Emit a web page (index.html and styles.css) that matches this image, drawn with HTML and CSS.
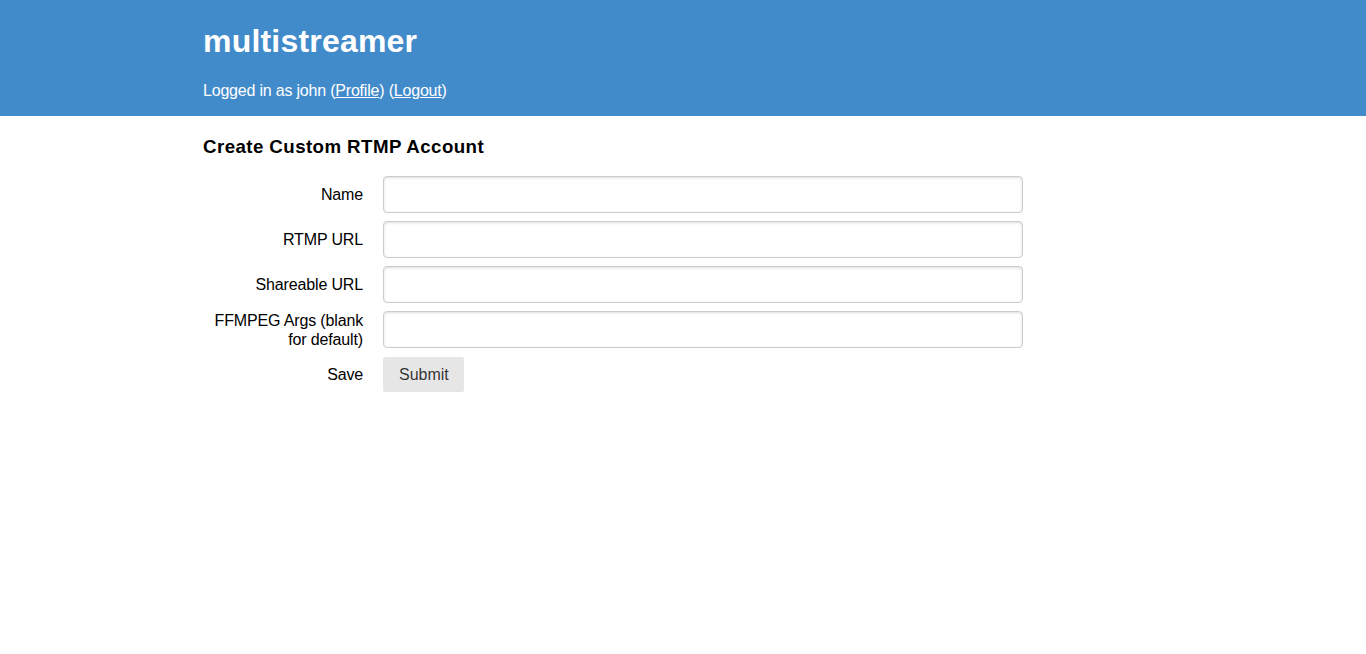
FILE: index.html
```html
<!DOCTYPE html>
<html>
<head>
<meta charset="utf-8">
<title>multistreamer</title>
<link rel="stylesheet" href="styles.css">
</head>
<body>
<header class="site-header">
  <div class="container">
    <h1 class="site-title">multistreamer</h1>
    <p class="user-line">Logged in as john (<a href="#">Profile</a>) (<a href="#">Logout</a>)</p>
  </div>
</header>
<main class="container">
  <h3 class="page-title">Create Custom RTMP Account</h3>
  <form class="form-aligned">
    <div class="control-group">
      <label class="control-label" for="name">Name</label>
      <input class="text-input" id="name" type="text">
    </div>
    <div class="control-group">
      <label class="control-label" for="rtmp">RTMP URL</label>
      <input class="text-input" id="rtmp" type="text">
    </div>
    <div class="control-group">
      <label class="control-label" for="share">Shareable URL</label>
      <input class="text-input" id="share" type="text">
    </div>
    <div class="control-group control-group-top">
      <label class="control-label" for="ffmpeg">FFMPEG Args (blank for default)</label>
      <input class="text-input" id="ffmpeg" type="text">
    </div>
    <div class="control-group">
      <label class="control-label">Save</label>
      <button class="btn" type="button">Submit</button>
    </div>
  </form>
</main>
</body>
</html>
```
FILE: styles.css
```css
html, body {
  margin: 0;
  padding: 0;
  background: #fff;
  font-family: "Liberation Sans", Arial, sans-serif;
  font-size: 16px;
  color: #000;
}
.container {
  width: 960px;
  margin: 0 auto;
}
.site-header {
  background: #428bca;
  color: #fff;
  padding: 23px 0 16px;
}
.site-title {
  margin: 0 0 21.5px;
  font-size: 32px;
  font-weight: bold;
  line-height: normal;
  letter-spacing: 0.2px;
}
.user-line {
  margin: 0;
  line-height: normal;
  letter-spacing: -0.2px;
}
.user-line a {
  color: #fff;
  text-decoration: underline;
}
.page-title {
  margin: 20px 0 18.7px;
  font-size: 18.72px;
  font-weight: bold;
  line-height: normal;
  letter-spacing: 0.42px;
}
.form-aligned {
  margin: 0;
}
.control-group {
  display: flex;
  align-items: center;
  margin-bottom: 8px;
}
.control-group-top {
  align-items: flex-start;
}
.control-label {
  width: 160px;
  margin-right: 20px;
  text-align: right;
  line-height: 19px;
  letter-spacing: -0.15px;
  flex: none;
}
.text-input {
  width: 640px;
  height: 37px;
  box-sizing: border-box;
  padding: 8px 9.6px;
  border: 1px solid #ccc;
  border-radius: 4px;
  box-shadow: inset 0 1px 3px #ddd;
  font-family: inherit;
  font-size: 16px;
  background: #fff;
  margin: 0;
}
.btn {
  font-family: inherit;
  font-size: 16px;
  line-height: normal;
  padding: 8px 16px;
  height: 35px;
  width: 81px;
  background: #e6e6e6;
  color: rgba(0, 0, 0, 0.8);
  border: none;
  border-radius: 2px;
  margin: 0;
}
```
